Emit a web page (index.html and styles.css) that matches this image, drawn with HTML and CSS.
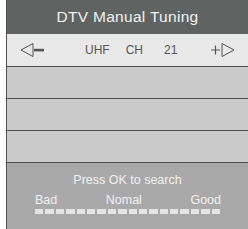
FILE: index.html
```html
<!DOCTYPE html>
<html lang="en">
<head>
  <meta charset="UTF-8">
  <title>DTV Manual Tuning</title>
  <link rel="stylesheet" href="styles.css">
</head>
<body>
  <div class="panel">
    <header class="title">DTV Manual Tuning</header>

    <div class="tuner">
      <span class="arrow left">
        <svg width="26" height="16" viewBox="0 0 26 16">
          <polygon points="1,8 13,1.5 13,14.5" fill="none" stroke="#555" stroke-width="1"/>
          <rect x="14" y="6.8" width="10" height="2.6" fill="#555"/>
        </svg>
      </span>
      <span class="band">UHF</span>
      <span class="ch">CH</span>
      <span class="num">21</span>
      <span class="arrow right">
        <svg width="26" height="16" viewBox="0 0 26 16">
          <path d="M1 8 H10 M5.5 3.5 V12.5" stroke="#555" stroke-width="1.2"/>
          <polygon points="12,1.5 24,8 12,14.5" fill="none" stroke="#555" stroke-width="1"/>
        </svg>
      </span>
    </div>

    <div class="row"></div>
    <div class="row"></div>
    <div class="row"></div>

    <div class="status">
      <p class="hint">Press OK to search</p>
      <div class="labels">
        <span>Bad</span>
        <span>Nomal</span>
        <span>Good</span>
      </div>
      <div class="meter">
        <i></i><i></i><i></i><i></i><i></i><i></i>
        <i></i><i></i><i></i><i></i><i></i><i></i>
        <i></i><i></i><i></i><i></i><i></i><i></i>
      </div>
    </div>
  </div>
</body>
</html>
```

FILE: styles.css
```css
* {
  box-sizing: border-box;
  margin: 0;
  padding: 0;
  font-family: 'Liberation Sans', Arial, sans-serif;
}

body {
  background: white;
  width: 248px;
  height: 229px;
  overflow: hidden;
}

.panel {
  margin-left: 6px;
  border-left: 1px solid #505050;
  height: 229px;
}

.title {
  height: 34px;
  background: #5f6361;
  color: #f2f2f2;
  font-size: 15.5px;
  letter-spacing: 0.3px;
  text-align: center;
  line-height: 34px;
}

.tuner {
  height: 33px;
  background: #e9e9e9;
  border-bottom: 1px solid #4e4e4e;
  display: flex;
  align-items: center;
  color: #555;
  font-size: 12px;
}

.arrow.left {
  margin-left: 13px;
  display: flex;
}

.band {
  margin-left: 39px;
}

.ch {
  margin-left: 16px;
}

.num {
  margin-left: 21px;
}

.arrow.right {
  margin-left: 33px;
  display: flex;
}

.row {
  height: 32px;
  background: #c9cac9;
  border-bottom: 1px solid #4e4e4e;
}

.status {
  height: 66px;
  background: #a9a9a9;
  padding-top: 10px;
  color: #f1f1f1;
}

.hint {
  font-size: 12.5px;
  text-align: center;
  line-height: 14px;
}

.labels {
  display: flex;
  justify-content: space-between;
  width: 186px;
  margin: 6px 0 0 28px;
  font-size: 12.5px;
  line-height: 14px;
}

.meter {
  display: flex;
  gap: 2px;
  margin: 2px 0 0 28px;
}

.meter i {
  width: 8.4px;
  height: 5px;
  background: #e4e4e4;
}
```
